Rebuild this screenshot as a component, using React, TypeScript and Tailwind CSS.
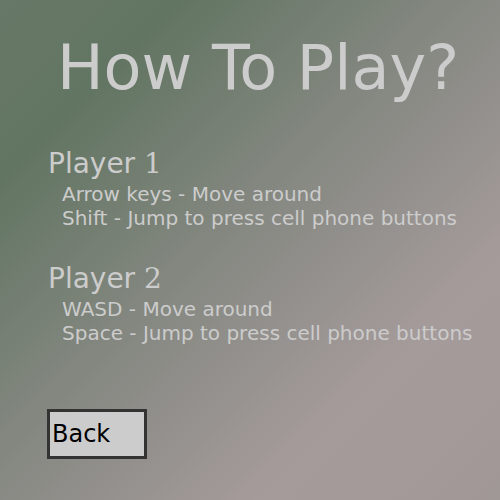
import React from "react";

const sans = { fontFamily: '"DejaVu Sans", Verdana, sans-serif' };

function Heading({ n }: { n: string }) {
  return (
    <div className="text-[28px] leading-[32px] text-[#cccccc]">
      Player{" "}
      <span style={{ fontFamily: '"DejaVu Serif", serif' }}>{n}</span>
    </div>
  );
}

export default function App() {
  return (
    <div
      className="w-[500px] h-[500px] overflow-hidden bg-[linear-gradient(135deg,#687868_0%,#627562_18%,#878983_48%,#a59b9b_76%,#a09896_100%)]"
      style={sans}
    >
      <h1 className="pt-[32px] pl-[16px] text-center text-[62px] leading-[72px] text-[#cccccc]">
        How To Play?
      </h1>
      <div className="pl-[48px] mt-[44px] flex flex-col">
        <Heading n="1" />
        <div className="mt-[2px] pl-[14px] text-[20px] leading-[24px] text-[#cccccc]">
          <div>Arrow keys - Move around</div>
          <div>Shift - Jump to press cell phone buttons</div>
        </div>
        <div className="mt-[33px]">
          <Heading n="2" />
        </div>
        <div className="mt-[2px] pl-[14px] text-[20px] leading-[24px] text-[#cccccc]">
          <div>WASD - Move around</div>
          <div>Space - Jump to press cell phone buttons</div>
        </div>
        <div className="mt-[64px] -ml-px">
          <button className="w-[100px] h-[50px] border-[3px] border-[#333333] bg-[#cccccc] text-black text-[24px] leading-[28px] flex items-center pl-[2px]">
            Back
          </button>
        </div>
      </div>
    </div>
  );
}
